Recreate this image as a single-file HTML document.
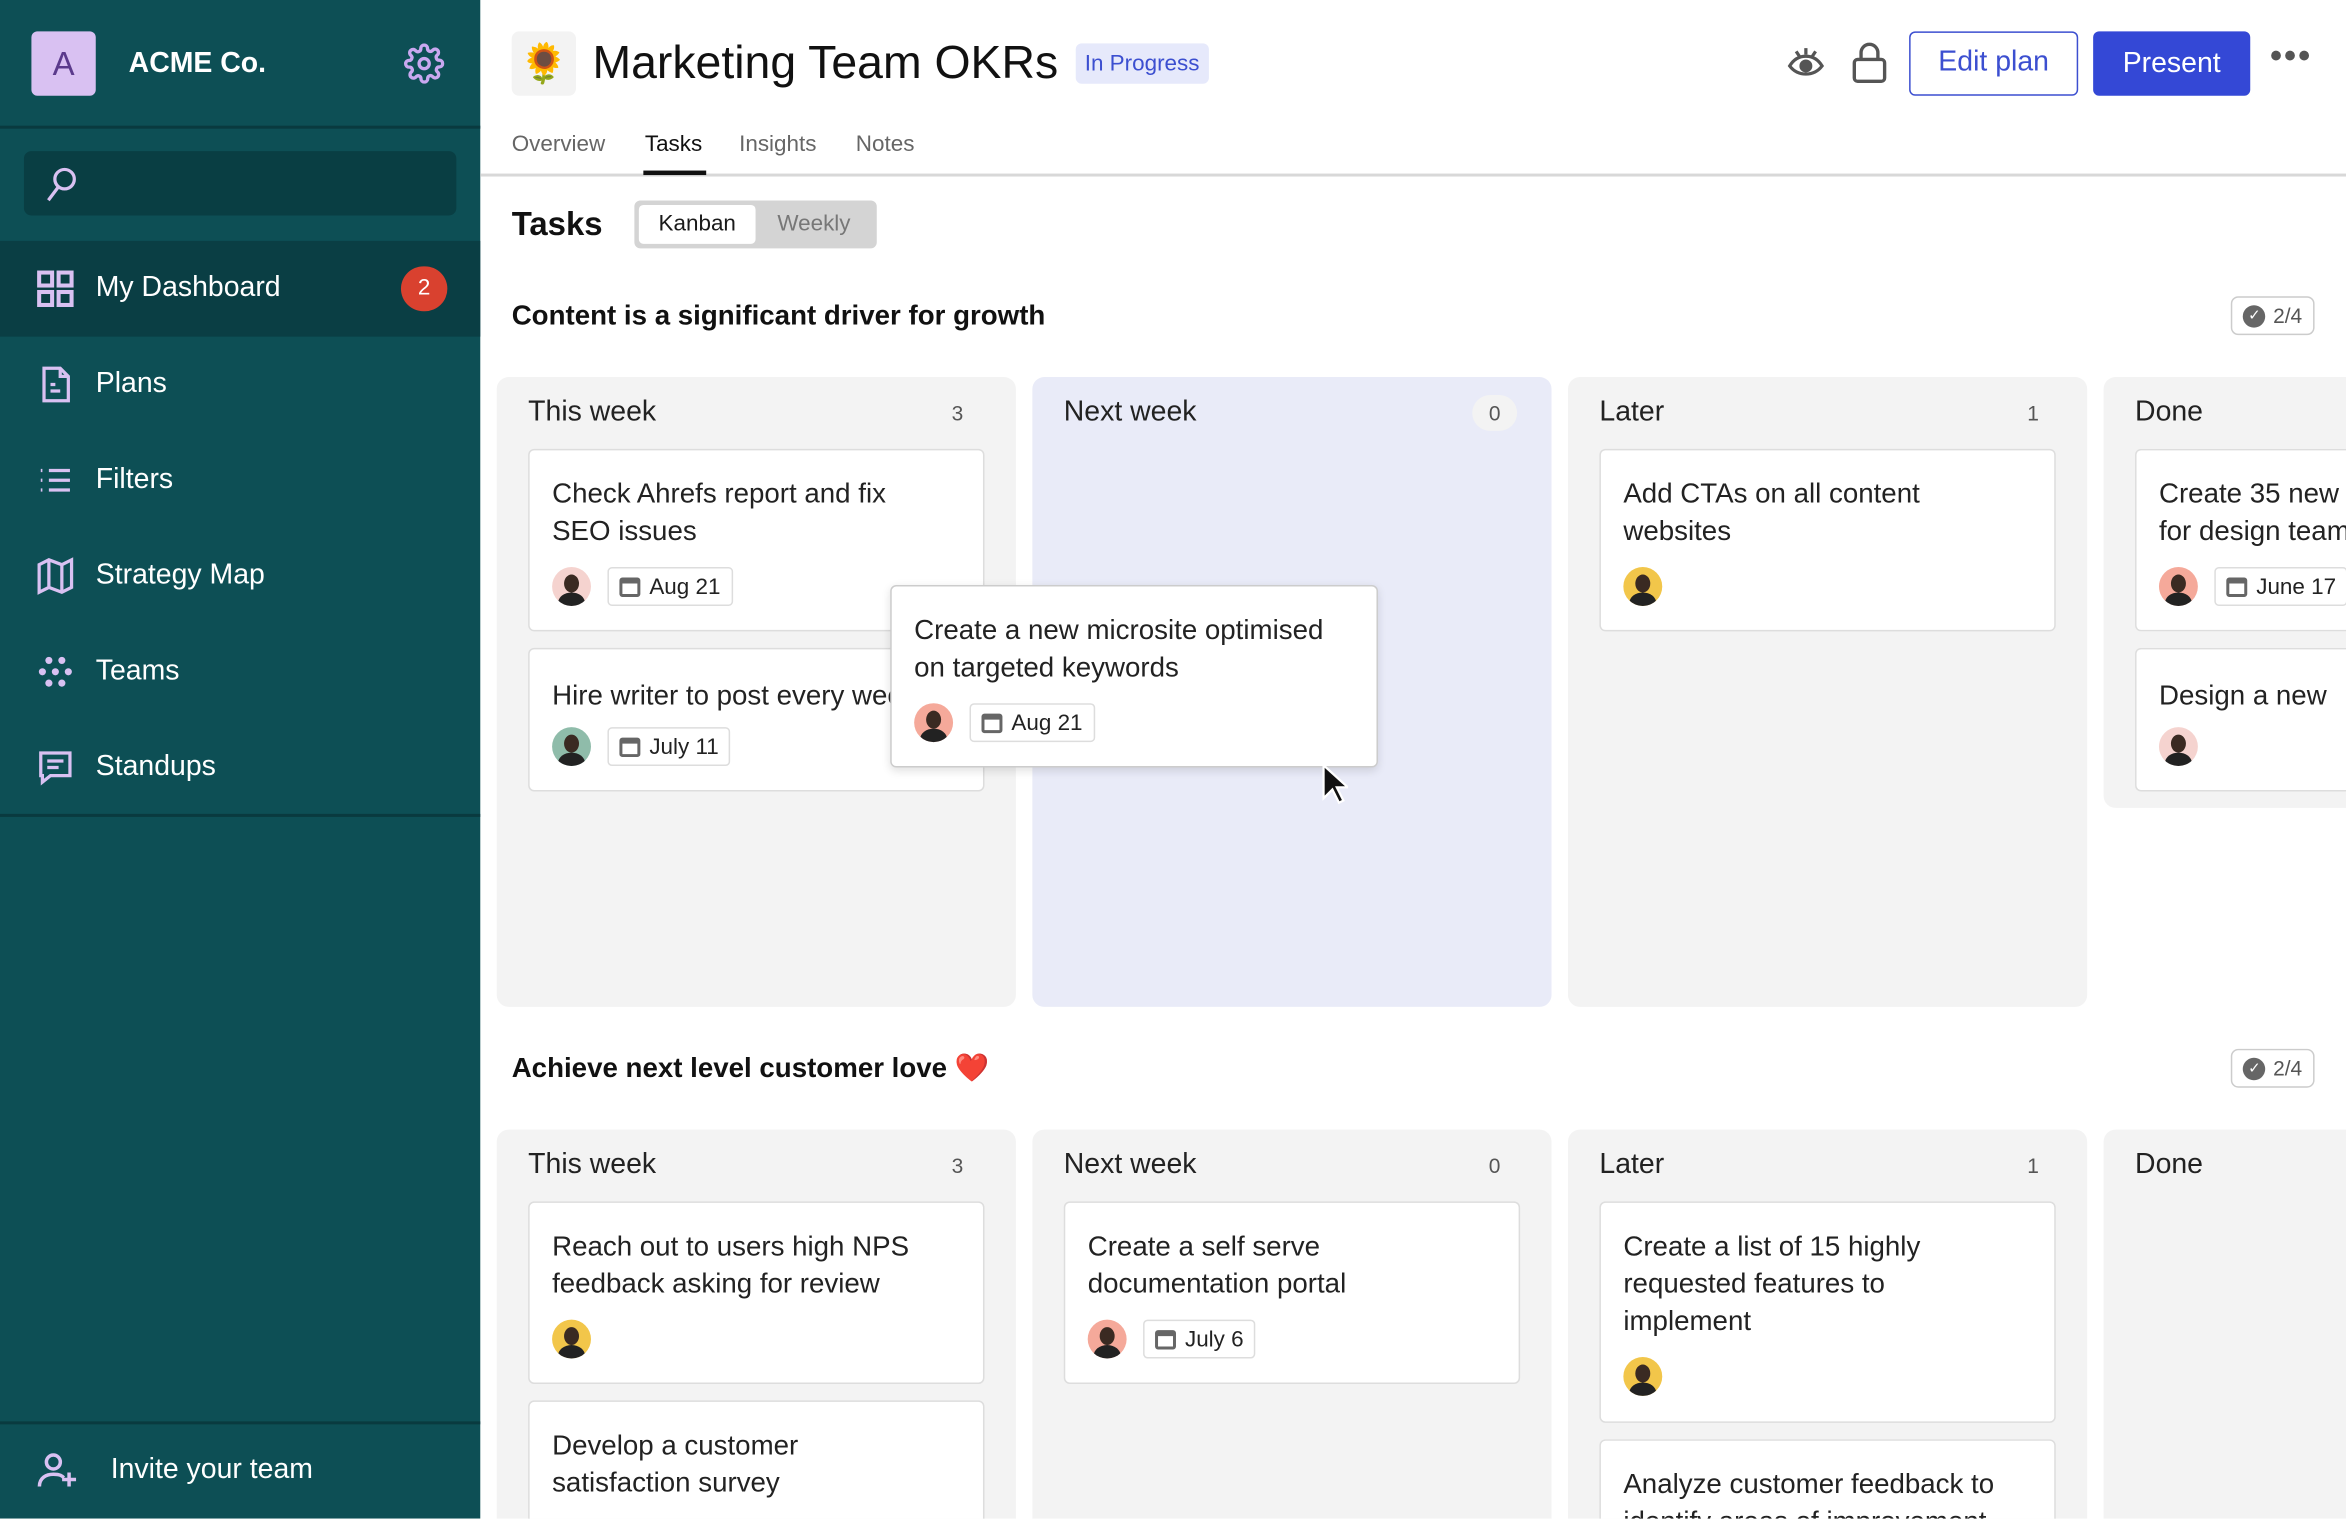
<!DOCTYPE html>
<html><head><meta charset="utf-8"><style>
*{box-sizing:border-box;margin:0;padding:0}
html,body{width:2346px;height:1518px;overflow:hidden;background:#fff}
#w{position:absolute;left:0;top:0;width:1568px;height:1015px;transform:scale(1.49617);transform-origin:0 0;font-family:"Liberation Sans",sans-serif;color:#1a1a1a;overflow:hidden}
.a{position:absolute}
.sb{left:0;top:0;width:321px;height:1015px;background:#0d4f55;color:#fff}
.nav{left:0;width:321px;height:64px;display:flex;align-items:center;padding-left:24px;font-size:19px}
.nav svg{margin-right:14px}
.col{background:#f3f3f3;border-radius:8px}
.ch{font-size:19px;color:#222}
.cnt{font-size:14px;color:#555}
.card{background:#fff;border:1.5px solid #ddd;border-radius:4px;padding:16px 15px 0 15px;font-size:18.5px;line-height:25px;color:#222;overflow:hidden;white-space:nowrap}
.meta{display:flex;align-items:center;margin-top:12px}
.av{width:26px;height:26px;border-radius:50%;margin-right:11px;position:relative;overflow:hidden}
.av::after{content:"";position:absolute;left:8px;top:5px;width:10px;height:12px;border-radius:50%;background:#3a2a22}
.av::before{content:"";position:absolute;left:4px;top:17px;width:18px;height:14px;border-radius:50%;background:#222}
.dt{border:1.5px solid #ddd;border-radius:3px;height:26px;padding:0 7px;display:flex;align-items:center;font-size:15px}
.cal{width:14px;height:13px;border:2px solid #666;border-top-width:4px;border-radius:2px;margin-right:6px}
.badge{border:1.5px solid #ccc;border-radius:5px;height:26px;width:56px;font-size:14px;color:#555;display:flex;align-items:center;justify-content:center}
.chk{width:15px;height:15px;border-radius:50%;background:#666;margin-right:5px;color:#fff;font-size:10px;text-align:center;line-height:15px}
</style></head><body><div id="w">
<div class="a sb">
 <div class="a" style="left:21px;top:21px;width:43px;height:43px;border-radius:4px;background:#d9c1f2;color:#5b3a8c;font-size:22px;text-align:center;line-height:43px">A</div>
 <div class="a" style="left:86px;top:32px;font-size:19px;font-weight:bold">ACME Co.</div>
 <svg class="a" style="left:270px;top:29px" width="27" height="27" viewBox="0 0 24 24" fill="none" stroke="#c9a8f0" stroke-width="2"><circle cx="12" cy="12" r="3"/><path d="M19.4 15a1.6 1.6 0 0 0 .3 1.8l.1.1a2 2 0 1 1-2.8 2.8l-.1-.1a1.6 1.6 0 0 0-1.8-.3 1.6 1.6 0 0 0-1 1.5V21a2 2 0 1 1-4 0v-.1a1.6 1.6 0 0 0-1-1.5 1.6 1.6 0 0 0-1.8.3l-.1.1a2 2 0 1 1-2.8-2.8l.1-.1a1.6 1.6 0 0 0 .3-1.8 1.6 1.6 0 0 0-1.5-1H3a2 2 0 1 1 0-4h.1a1.6 1.6 0 0 0 1.5-1 1.6 1.6 0 0 0-.3-1.8l-.1-.1a2 2 0 1 1 2.8-2.8l.1.1a1.6 1.6 0 0 0 1.8.3H9a1.6 1.6 0 0 0 1-1.5V3a2 2 0 1 1 4 0v.1a1.6 1.6 0 0 0 1 1.5 1.6 1.6 0 0 0 1.8-.3l.1-.1a2 2 0 1 1 2.8 2.8l-.1.1a1.6 1.6 0 0 0-.3 1.8V9a1.6 1.6 0 0 0 1.5 1H21a2 2 0 1 1 0 4h-.1a1.6 1.6 0 0 0-1.5 1z"/></svg>
 <div class="a" style="left:0;top:84px;width:321px;height:2px;background:#093a3f"></div>
 <div class="a" style="left:16px;top:101px;width:289px;height:43px;border-radius:5px;background:#093e43"></div>
 <svg class="a" style="left:28px;top:110px" width="26" height="26" viewBox="0 0 24 24" fill="none" stroke="#d9c1f2" stroke-width="2"><circle cx="14" cy="9" r="6"/><path d="M10 14l-6 8"/></svg>
 <div class="a" style="left:0;top:161px;width:321px;height:64px;background:#0a3e44"></div>
 <div class="a nav" style="top:161px"><svg width="26" height="26" viewBox="0 0 24 24" fill="none" stroke="#d9c1f2" stroke-width="2.5"><rect x="2" y="2" width="8" height="8"/><rect x="14" y="2" width="8" height="8"/><rect x="2" y="14" width="8" height="8"/><rect x="14" y="14" width="8" height="8"/></svg>My Dashboard
  <div class="a" style="left:268px;top:17px;width:31px;height:30px;border-radius:15px;background:#d9412f;font-size:15px;text-align:center;line-height:30px">2</div></div>
 <div class="a nav" style="top:225px"><svg width="26" height="26" viewBox="0 0 24 24" fill="none" stroke="#d9c1f2" stroke-width="2"><path d="M5 2h10l5 5v15H5z M15 2v5h5 M9 12h3 M9 16h6"/></svg>Plans</div>
 <div class="a nav" style="top:289px"><svg width="26" height="26" viewBox="0 0 24 24" fill="none" stroke="#d9c1f2" stroke-width="2"><path d="M3 6h1M8 6h13M3 12h1M8 12h13M3 18h1M8 18h13"/></svg>Filters</div>
 <div class="a nav" style="top:353px"><svg width="26" height="26" viewBox="0 0 24 24" fill="none" stroke="#d9c1f2" stroke-width="2"><path d="M2 5l6-3 8 3 6-3v17l-6 3-8-3-6 3z M8 2v17 M16 5v17"/></svg>Strategy Map</div>
 <div class="a nav" style="top:417px"><svg width="26" height="26" viewBox="0 0 24 24" fill="#d9c1f2"><circle cx="8" cy="5" r="2.2"/><circle cx="16" cy="5" r="2.2"/><circle cx="4" cy="12" r="2.2"/><circle cx="12" cy="12" r="2.2"/><circle cx="20" cy="12" r="2.2"/><circle cx="8" cy="19" r="2.2"/><circle cx="16" cy="19" r="2.2"/></svg>Teams</div>
 <div class="a nav" style="top:481px"><svg width="26" height="26" viewBox="0 0 24 24" fill="none" stroke="#d9c1f2" stroke-width="2"><path d="M3 3h18v14H9l-5 4v-4H3z M7 8h10 M7 12h7"/></svg>Standups</div>
 <div class="a" style="left:0;top:544px;width:321px;height:2px;background:#093a3f"></div>
 <div class="a" style="left:0;top:950px;width:321px;height:2px;background:#093a3f"></div>
 <div class="a nav" style="top:951px;padding-left:24px"><svg width="28" height="28" viewBox="0 0 24 24" fill="none" stroke="#d9c1f2" stroke-width="2" style="margin-right:22px"><circle cx="10" cy="7" r="4"/><path d="M2 21c0-5 4-7 8-7s5 1 6 2 M19 13v8 M15 17h8"/></svg>Invite your team</div>
</div>

<div class="a" style="left:342px;top:21px;width:43px;height:43px;border-radius:5px;background:#f3f3f3;text-align:center;line-height:43px;font-size:26px">🌻</div>
<div class="a" style="left:396px;top:24px;font-size:31px;color:#111">Marketing Team OKRs</div>
<div class="a" style="left:719px;top:29px;height:27px;padding:0 6px;border-radius:4px;background:#e6e9fb;color:#3c4fd0;font-size:15px;line-height:27px">In Progress</div>
<svg class="a" style="left:1194px;top:30px" width="26" height="26" viewBox="0 0 24 24" fill="none" stroke="#555" stroke-width="2"><path d="M2 13c3-5 7-6 10-6s7 1 10 6c-3 4-7 5-10 5s-7-1-10-5z"/><circle cx="12" cy="13" r="3" fill="#555"/><path d="M6 4l2 3M12 2v4M18 4l-2 3"/></svg>
<svg class="a" style="left:1236px;top:27px" width="27" height="30" viewBox="0 0 24 26" fill="none" stroke="#555" stroke-width="2"><rect x="3" y="11" width="18" height="13" rx="2"/><path d="M7 11V7a5 5 0 0 1 10 0v4"/></svg>
<div class="a" style="left:1276px;top:21px;width:113px;height:43px;border:1.5px solid #3c4fd0;border-radius:4px;color:#3c4fd0;font-size:19px;text-align:center;line-height:40px">Edit plan</div>
<div class="a" style="left:1399px;top:21px;width:105px;height:43px;background:#3448d6;border-radius:4px;color:#fff;font-size:19px;text-align:center;line-height:43px">Present</div>
<div class="a" style="left:1517px;top:24px;font-size:24px;color:#555;letter-spacing:1px">•••</div>
<div class="a" style="left:342px;top:88px;font-size:15px;color:#666">Overview</div>
<div class="a" style="left:431px;top:88px;font-size:15px;color:#111">Tasks</div>
<div class="a" style="left:494px;top:88px;font-size:15px;color:#666">Insights</div>
<div class="a" style="left:572px;top:88px;font-size:15px;color:#666">Notes</div>
<div class="a" style="left:321px;top:116px;width:1247px;height:2px;background:#d8d8d8"></div>
<div class="a" style="left:430px;top:114px;width:42px;height:3px;background:#111"></div>
<div class="a" style="left:342px;top:137px;font-size:22px;font-weight:bold;color:#111">Tasks</div>
<div class="a" style="left:424px;top:134px;width:162px;height:32px;border-radius:4px;background:#d4d4d4"></div>
<div class="a" style="left:427px;top:137px;width:78px;height:26px;border-radius:3px;background:#fff;font-size:15px;text-align:center;line-height:26px">Kanban</div>
<div class="a" style="left:505px;top:137px;width:78px;height:26px;font-size:15px;color:#777;text-align:center;line-height:26px">Weekly</div>

<div class="a" style="left:342px;top:200px;font-size:18.5px;font-weight:bold;color:#111">Content is a significant driver for growth</div>
<div class="a badge" style="left:1491px;top:198px"><span class="chk">✓</span>2/4</div>

<div class="a col" style="left:332px;top:252px;width:347px;height:421px"></div>
<div class="a col" style="left:690px;top:252px;width:347px;height:421px;background:#e9ebf8"></div>
<div class="a col" style="left:1048px;top:252px;width:347px;height:421px"></div>
<div class="a col" style="left:1406px;top:252px;width:200px;height:288px"></div>
<div class="a ch" style="left:353px;top:265px">This week</div><div class="a cnt" style="left:636px;top:268px">3</div>
<div class="a ch" style="left:711px;top:265px">Next week</div><div class="a cnt" style="left:984px;top:264px;width:30px;height:24px;border-radius:12px;background:#f3f3f3;text-align:center;line-height:24px">0</div>
<div class="a ch" style="left:1069px;top:265px">Later</div><div class="a cnt" style="left:1355px;top:268px">1</div>
<div class="a ch" style="left:1427px;top:265px">Done</div>

<div class="a card" style="left:353px;top:300px;width:305px;height:122px">Check Ahrefs report and fix<br>SEO issues<div class="meta"><div class="av" style="background:#f5d3cf"></div><div class="dt"><span class="cal"></span>Aug 21</div></div></div>
<div class="a card" style="left:353px;top:433px;width:305px;height:96px;padding-top:18px">Hire writer to post every week<div class="meta" style="margin-top:9px"><div class="av" style="background:#8fbcaa"></div><div class="dt"><span class="cal"></span>July 11</div></div></div>
<div class="a card" style="left:1069px;top:300px;width:305px;height:122px">Add CTAs on all content<br>websites<div class="meta"><div class="av" style="background:#f2c64a"></div></div></div>
<div class="a card" style="left:1427px;top:300px;width:160px;height:122px;border-right:none">Create 35 new<br>for design team<div class="meta"><div class="av" style="background:#f5a99a"></div><div class="dt"><span class="cal"></span>June 17</div></div></div>
<div class="a card" style="left:1427px;top:433px;width:160px;height:96px;padding-top:18px;border-right:none">Design a new<div class="meta" style="margin-top:9px"><div class="av" style="background:#f5d3cf"></div></div></div>
<div class="a card" style="left:595px;top:391px;width:326px;height:122px;border-color:#ccc;box-shadow:0 2px 6px rgba(0,0,0,.12)">Create a new microsite optimised<br>on targeted keywords<div class="meta"><div class="av" style="background:#f5a99a"></div><div class="dt"><span class="cal"></span>Aug 21</div></div></div>
<svg class="a" style="left:883px;top:510px" width="18" height="28" viewBox="0 0 12 19"><path d="M1 1v15l4-4 3 6 2-1-3-6h5z" fill="#111" stroke="#fff" stroke-width="1"/></svg>

<div class="a" style="left:342px;top:703px;font-size:18.5px;font-weight:bold;color:#111">Achieve next level customer love <span style="color:#e02b2b">❤️</span></div>
<div class="a badge" style="left:1491px;top:701px"><span class="chk">✓</span>2/4</div>
<div class="a col" style="left:332px;top:755px;width:347px;height:300px"></div>
<div class="a col" style="left:690px;top:755px;width:347px;height:300px"></div>
<div class="a col" style="left:1048px;top:755px;width:347px;height:300px"></div>
<div class="a col" style="left:1406px;top:755px;width:200px;height:300px"></div>
<div class="a ch" style="left:353px;top:768px">This week</div><div class="a cnt" style="left:636px;top:771px">3</div>
<div class="a ch" style="left:711px;top:768px">Next week</div><div class="a cnt" style="left:995px;top:771px">0</div>
<div class="a ch" style="left:1069px;top:768px">Later</div><div class="a cnt" style="left:1355px;top:771px">1</div>
<div class="a ch" style="left:1427px;top:768px">Done</div>
<div class="a card" style="left:353px;top:803px;width:305px;height:122px">Reach out to users high NPS<br>feedback asking for review<div class="meta"><div class="av" style="background:#f2c64a"></div></div></div>
<div class="a card" style="left:353px;top:936px;width:305px;height:100px">Develop a customer<br>satisfaction survey</div>
<div class="a card" style="left:711px;top:803px;width:305px;height:122px">Create a self serve<br>documentation portal<div class="meta"><div class="av" style="background:#f5a99a"></div><div class="dt"><span class="cal"></span>July 6</div></div></div>
<div class="a card" style="left:1069px;top:803px;width:305px;height:148px">Create a list of 15 highly<br>requested features to<br>implement<div class="meta"><div class="av" style="background:#f2c64a"></div></div></div>
<div class="a card" style="left:1069px;top:962px;width:305px;height:80px">Analyze customer feedback to<br>identify areas of improvement</div>
</div></body></html>
